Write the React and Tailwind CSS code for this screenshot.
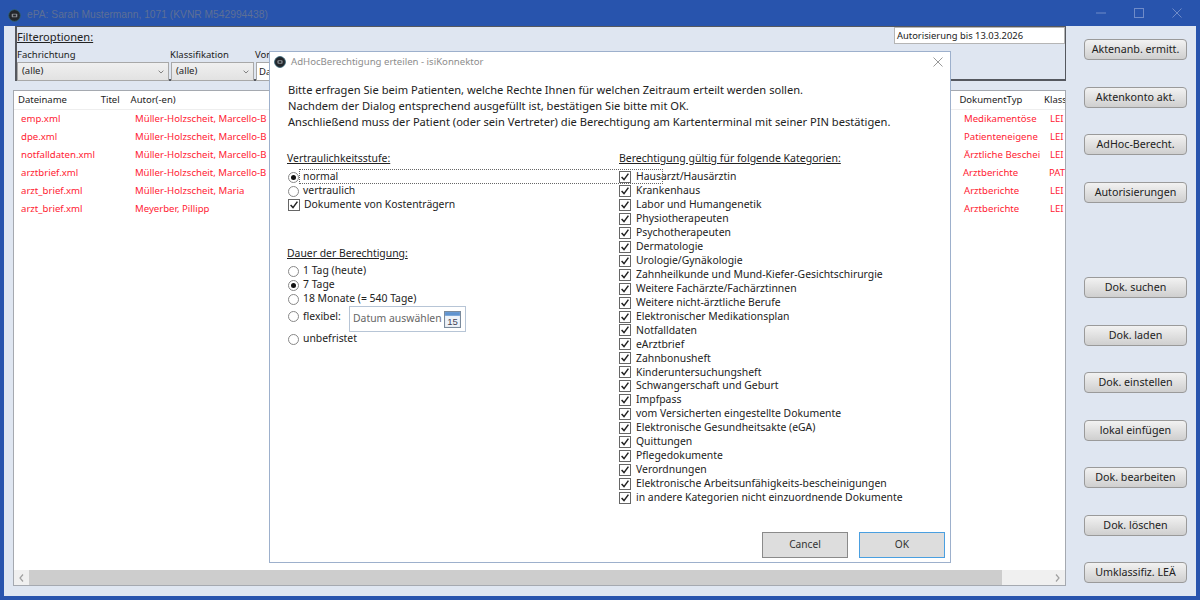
const rows = [
  ["emp.xml", "Müller-Holzscheit, Marcello-B", "Medikamentöse", "LEI"],
  ["dpe.xml", "Müller-Holzscheit, Marcello-B", "Patienteneigene", "LEI"],
  ["notfalldaten.xml", "Müller-Holzscheit, Marcello-B", "Ärztliche Beschei", "LEI"],
  ["arztbrief.xml", "Müller-Holzscheit, Marcello-B", "Arztberichte", "PAT"],
  ["arzt_brief.xml", "Müller-Holzscheit, Maria", "Arztberichte", "LEI"],
  ["arzt_brief.xml", "Meyerber, Pillipp", "Arztberichte", "LEI"],
];
const cats = [
  "Hausarzt/Hausärztin", "Krankenhaus", "Labor und Humangenetik", "Physiotherapeuten", "Psychotherapeuten", "Dermatologie",
  "Urologie/Gynäkologie", "Zahnheilkunde und Mund-Kiefer-Gesichtschirurgie", "Weitere Fachärzte/Fachärztinnen",
  "Weitere nicht-ärztliche Berufe", "Elektronischer Medikationsplan", "Notfalldaten", "eArztbrief", "Zahnbonusheft",
  "Kinderuntersuchungsheft", "Schwangerschaft und Geburt", "Impfpass", "vom Versicherten eingestellte Dokumente",
  "Elektronische Gesundheitsakte (eGA)", "Quittungen", "Pflegedokumente", "Verordnungen",
  "Elektronische Arbeitsunfähigkeits-bescheinigungen", "in andere Kategorien nicht einzuordnende Dokumente",
];
const Logo = ({ s = 13 }) => (
  <svg width={s} height={s} viewBox="0 0 14 14" className="shrink-0">
    <circle cx="7" cy="7" r="6.3" fill="#23262b" stroke="#2f5f70" strokeWidth="1" />
    <rect x="4" y="5" width="6" height="4" rx="1" fill="#8a8f94" />
    <rect x="5.5" y="6" width="3" height="2" fill="#23262b" />
  </svg>
);
const Check = () => (
  <span className="w-[12px] h-[12px] border border-[#666] bg-white shrink-0 flex items-center justify-center">
    <svg width="10" height="10" viewBox="0 0 10 10"><path d="M1.6 5 L4 7.6 L8.4 1.6" fill="none" stroke="#222" strokeWidth="1.5" /></svg>
  </span>
);
const Radio = ({ on }) => (
  <span className="w-[11px] h-[11px] rounded-full border border-[#888] bg-white shrink-0 flex items-center justify-center">
    {on && <span className="w-[5px] h-[5px] rounded-full bg-[#111]" />}
  </span>
);
const Chevron = () => (
  <svg width="6" height="4" viewBox="0 0 7 5"><path d="M0.5 0.8 L3.5 3.8 L6.5 0.8" fill="none" stroke="#666" strokeWidth="1" /></svg>
);
const Btn = ({ children }) => (
  <button className="w-[103px] h-[21px] rounded-[4px] border border-[#9a9a9a] bg-gradient-to-b from-[#f2f2f2] to-[#cfcfcf] text-[10.7px] leading-[19px] text-[#222] text-center whitespace-nowrap">{children}</button>
);
const RadioRow = ({ on, label, cls = "" }) => (
  <div className={"flex items-center h-[14px] gap-[4px] pl-[1px] " + cls}><Radio on={on} /><span>{label}</span></div>
);
const Combo = ({ w }) => (
  <div className={"h-[19px] border border-[#a8a8a8] bg-gradient-to-b from-[#f0f0f0] to-[#e2e2e2] flex items-center justify-between pl-[4px] pr-[4px] text-[9.5px] " + w}>
    <span>(alle)</span><Chevron />
  </div>
);

export default function App() {
  return (
    <div className="relative w-[1200px] h-[600px] overflow-hidden bg-[#2854ad] pl-[4px] pr-[4px] pb-[4px] flex flex-col text-[10.4px] text-[#222]" style={{ fontFamily: '"Noto Sans", "Open Sans", sans-serif' }}>
      <div className="h-[26px] shrink-0 flex items-center justify-between pl-[4px]">
        <div className="flex items-center gap-[6px] pt-[4px]">
          <Logo />
          <span className="text-[10.25px] text-[#5d6f96]" style={{ fontFamily: '"Liberation Sans", sans-serif' }}>ePA: Sarah Mustermann, 1071 (KVNR M542994438)</span>
        </div>
        <div className="flex items-center pr-[14px] gap-[28px] text-[#6f8bc8]">
          <svg width="10" height="10" viewBox="0 0 10 10"><path d="M0 5 H10" stroke="currentColor" /></svg>
          <svg width="10" height="10" viewBox="0 0 10 10"><rect x="0.5" y="0.5" width="9" height="9" fill="none" stroke="currentColor" /></svg>
          <svg width="10" height="10" viewBox="0 0 10 10"><path d="M0.5 0.5 L9.5 9.5 M9.5 0.5 L0.5 9.5" stroke="currentColor" /></svg>
        </div>
      </div>
      <div className="flex-1 min-h-0 bg-[#dfe6f1] flex">
        <div className="w-[1062px] shrink-0 pl-[9px] flex flex-col">
          <div className="relative ml-[2px] h-[55px] shrink-0 border-l-2 border-t border-r border-b-2 border-[#55585f] flex flex-col">
            <div className="h-[19px] text-[11.1px] leading-[19px] underline">Filteroptionen:</div>
            <div className="flex mt-[2px] h-[13px] leading-[13px] text-[9.5px]">
              <span className="w-[153px]">Fachrichtung</span><span className="w-[85px]">Klassifikation</span><span>Von</span>
            </div>
            <div className="flex gap-[2px] mt-[1px]">
              <Combo w="w-[152px]" />
              <Combo w="w-[83px]" />
              <div className="h-[19px] w-[20px] bg-white border border-[#a8a8a8] pl-[2px] text-[9.5px] leading-[17px]">Da</div>
            </div>
            <div className="absolute right-0 top-0 w-[171px] h-[17px] bg-white border border-[#b5b5b5] pl-[2px] leading-[15px] text-[9.4px]">Autorisierung bis 13.03.2026</div>
          </div>
          <div className="mt-[9px] h-[496px] bg-white border border-[#a5a9b0] flex flex-col relative">
            <div className="h-[19px] pt-[1px] flex items-center shrink-0 bg-white border-b border-[#eee] pl-[4px] text-[9.5px]">
              <span className="w-[83px]">Dateiname</span><span className="w-[30px]">Titel</span><span className="w-[829px]">Autor(-en)</span><span className="w-[85px] pl-[3px]">DokumentTyp</span><span className="w-[24px] pl-[3px] overflow-hidden whitespace-nowrap">Klass</span>
            </div>
            <div className="flex-1 text-[#ff2233]">
              {rows.map((r, i) => (
                <div key={i} className="h-[18px] flex items-center whitespace-nowrap text-[9.6px]">
                  <span className="w-[121px] pl-[7px]">{r[0]}</span>
                  <span className="w-[829px]">{r[1]}</span>
                  <span className="w-[86px]">{r[2]}</span>
                  <span>{r[3]}</span>
                </div>
              ))}
            </div>
            <div className="h-[15px] shrink-0 bg-[#f0f0f0] flex items-center">
              <span className="w-[15px] flex justify-center text-[#a0a0a0]"><svg width="5" height="8" viewBox="0 0 5 8"><path d="M4 0.5 L1 4 L4 7.5" fill="none" stroke="currentColor" strokeWidth="1.2" /></svg></span>
              <div className="w-[973px] h-full bg-[#cdcdcd]" />
              <span className="flex-1 flex justify-end pr-[5px] text-[#a0a0a0]"><svg width="5" height="8" viewBox="0 0 5 8"><path d="M1 0.5 L4 4 L1 7.5" fill="none" stroke="currentColor" strokeWidth="1.2" /></svg></span>
            </div>
          </div>
        </div>
        <div className="pl-[18px] grid auto-rows-[47.55px] items-center">
          <Btn>Aktenanb. ermitt.</Btn>
          <Btn>Aktenkonto akt.</Btn>
          <Btn>AdHoc-Berecht.</Btn>
          <Btn>Autorisierungen</Btn>
          <div />
          <Btn>Dok. suchen</Btn>
          <Btn>Dok. laden</Btn>
          <Btn>Dok. einstellen</Btn>
          <Btn>lokal einfügen</Btn>
          <Btn>Dok. bearbeiten</Btn>
          <Btn>Dok. löschen</Btn>
          <Btn>Umklassifiz. LEÄ</Btn>
        </div>
      </div>

      <div className="absolute left-[269px] top-[51px] w-[682px] h-[512px] bg-white border border-[#9db0cc] flex flex-col">
        <div className="h-[20px] shrink-0 flex items-center justify-between pl-[4px] pr-[7px]">
          <div className="flex items-center gap-[5px]">
            <Logo s={12} />
            <span className="text-[#8d8d8d] text-[9.6px]">AdHocBerechtigung erteilen - isiKonnektor</span>
          </div>
          <svg width="10" height="10" viewBox="0 0 10 10"><path d="M0.5 0.5 L9.5 9.5 M9.5 0.5 L0.5 9.5" stroke="#999" /></svg>
        </div>
        <div className="pl-[18px] pt-[10px] text-[11.14px] leading-[16px] whitespace-nowrap">
          <p>Bitte erfragen Sie beim Patienten, welche Rechte Ihnen für welchen Zeitraum erteilt werden sollen.</p>
          <p>Nachdem der Dialog entsprechend ausgefüllt ist, bestätigen Sie bitte mit OK.</p>
          <p>Anschließend muss der Patient (oder sein Vertreter) die Berechtigung am Kartenterminal mit seiner PIN bestätigen.</p>
        </div>
        <div className="flex pl-[17px] mt-[20px] flex-1 min-h-0">
          <div className="w-[332px] shrink-0 flex flex-col relative">
            <div className="underline h-[16px] leading-[16px]">Vertraulichkeitsstufe:</div>
            <div className="mt-[4px] flex flex-col">
              <RadioRow on label="normal" />
              <RadioRow label="vertraulich" />
              <div className="flex items-center h-[14px] gap-[4px] pl-[1px]"><Check /><span>Dokumente von Kostenträgern</span></div>
            </div>
            <div className="underline h-[16px] leading-[16px] mt-[33px]">Dauer der Berechtigung:</div>
            <div className="mt-[3px] flex flex-col">
              <RadioRow label="1 Tag (heute)" cls="h-[14px]" />
              <RadioRow on label="7 Tage" cls="h-[13.5px]" />
              <RadioRow label="18 Monate (= 540 Tage)" cls="h-[13.5px]" />
              <div className="flex items-center h-[26px] gap-[4px] pl-[1px]">
                <span className="flex items-center gap-[4px] pb-[4px]"><Radio /><span className="w-[42px]">flexibel:</span></span>
                <div className="w-[117px] h-[26px] border border-[#b7c5d6] flex items-center pl-[3px] gap-[3px] shrink-0">
                  <span className="text-[#666] whitespace-nowrap w-[88px]">Datum auswählen</span>
                  <svg width="17" height="17" viewBox="0 0 16 16" className="shrink-0">
                    <rect x="0.5" y="0.5" width="15" height="15" fill="#eef3f9" stroke="#7a8a9c" />
                    <rect x="1" y="1" width="14" height="3.5" fill="#5f93cf" />
                    <text x="8" y="13.5" fontSize="9" textAnchor="middle" fill="#445" fontFamily="Liberation Sans">15</text>
                  </svg>
                </div>
              </div>
              <RadioRow label="unbefristet" />
            </div>
          </div>
          <div className="flex-1 flex flex-col">
            <div className="underline h-[16px] leading-[16px] text-[10.5px]">Berechtigung gültig für folgende Kategorien:</div>
            <div className="mt-[4px] flex flex-col">
              {cats.map((c) => (
                <div key={c} className="flex items-center h-[13.96px] gap-[5px]"><Check /><span className="whitespace-nowrap">{c}</span></div>
              ))}
            </div>
          </div>
        </div>
        <div className="flex justify-end gap-[11px] pr-[5px] pb-[4px] shrink-0">
          <button className="w-[86px] h-[26px] bg-[#dddddd] border border-[#8a8a8a] text-[#333] text-[10.2px]">Cancel</button>
          <button className="w-[86px] h-[26px] bg-[#dddddd] border border-[#4a9fe0] text-[#333] text-[10.2px]">OK</button>
        </div>
        <div className="absolute left-[29px] top-[117px] w-[364px] h-[15px] border border-dotted border-[#666]" />
      </div>
    </div>
  );
}
